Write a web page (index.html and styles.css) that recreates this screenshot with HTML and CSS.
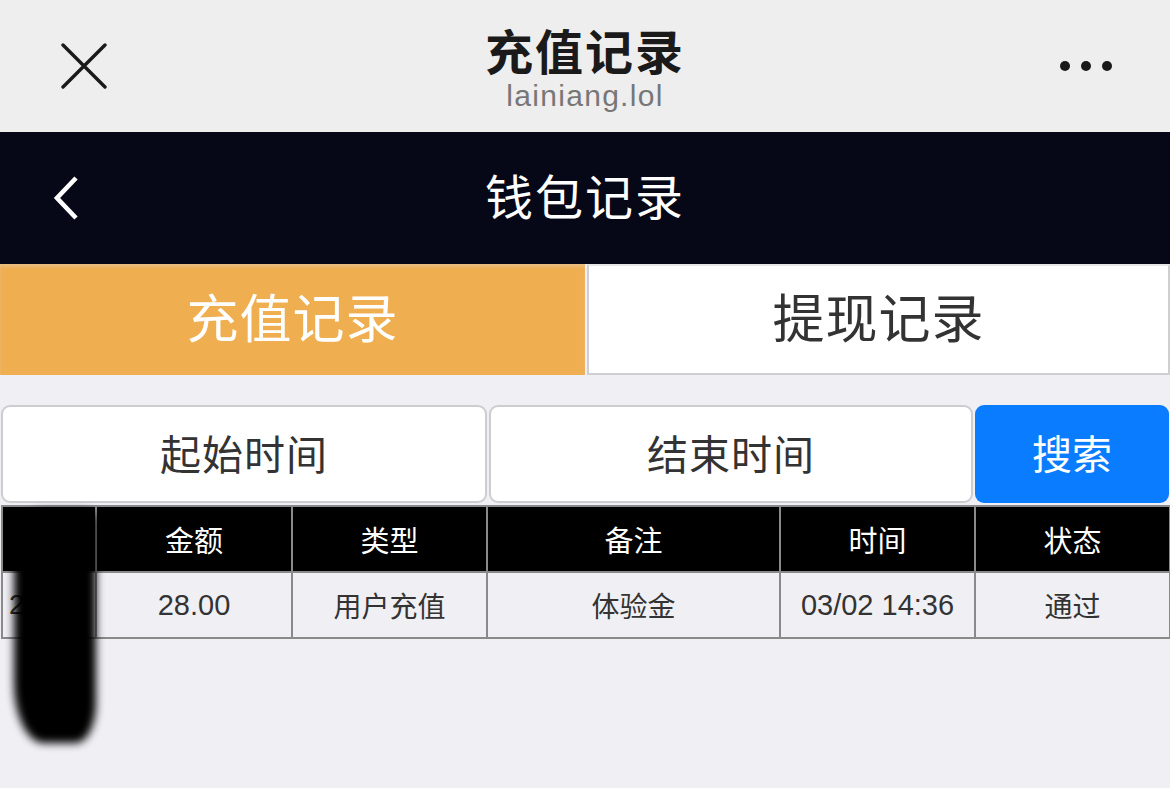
FILE: index.html
```html
<!DOCTYPE html>
<html lang="zh-CN">
<head>
<meta charset="utf-8">
<title>充值记录</title>
<link rel="stylesheet" href="styles.css">
</head>
<body>
<header class="topbar">
  <div class="top-left">
    <svg class="icon-close" width="46" height="46" viewBox="0 0 46 46"><path d="M2 2 L44 44 M44 2 L2 44" stroke="#1a1a1a" stroke-width="3.4" stroke-linecap="round" fill="none"/></svg>
  </div>
  <div class="top-title">
    <div class="top-main">充值记录</div>
    <div class="top-sub">lainiang.lol</div>
  </div>
  <div class="top-right">
    <span class="dot"></span><span class="dot"></span><span class="dot"></span>
  </div>
</header>

<nav class="navbar">
  <svg class="icon-back" width="30" height="46" viewBox="0 0 30 46"><path d="M25 3 L6 23 L25 43" stroke="#fff" stroke-width="4.6" stroke-linecap="butt" stroke-linejoin="miter" fill="none"/></svg>
  <div class="nav-title">钱包记录</div>
</nav>

<div class="tabs">
  <div class="tab tab-active">充值记录</div>
  <div class="tab tab-idle">提现记录</div>
</div>

<div class="filters">
  <div class="field">起始时间</div>
  <div class="field">结束时间</div>
  <div class="btn-search">搜索</div>
</div>

<div class="table-wrap">
  <table class="records">
    <colgroup>
      <col class="c-id"><col class="c-amt"><col class="c-type"><col class="c-note"><col class="c-time"><col class="c-state">
    </colgroup>
    <thead>
      <tr><th class="th-id">ID</th><th>金额</th><th>类型</th><th>备注</th><th>时间</th><th>状态</th></tr>
    </thead>
    <tbody>
      <tr><td class="td-id">2</td><td class="num">28.00</td><td>用户充值</td><td>体验金</td><td class="num">03/02 14:36</td><td>通过</td></tr>
    </tbody>
  </table>
  <div class="redact"></div>
</div>
</body>
</html>
```
FILE: styles.css
```css
* { box-sizing: border-box; }
html, body { margin: 0; padding: 0; }
body {
  width: 1170px;
  height: 788px;
  overflow: hidden;
  background: #efeff4;
  font-family: "Liberation Sans", "Noto Sans CJK SC", sans-serif;
  color: #333;
}

.topbar {
  height: 132px;
  background: #eeeeee;
  display: grid;
  grid-template-columns: 1fr auto 1fr;
  align-items: center;
}
.top-left { padding-left: 61px; display: flex; align-items: center; }
.icon-close { display: block; }
.top-title {
  text-align: center;
  display: flex;
  flex-direction: column;
  gap: 7px;
}
.top-main {
  font-family: "Noto Sans CJK SC", sans-serif;
  font-weight: 700;
  font-size: 48px;
  line-height: 52px;
  letter-spacing: 2px;
  color: #1a1a1a;
}
.top-sub {
  font-family: "Liberation Sans", "Noto Sans", sans-serif;
  font-size: 30px;
  line-height: 28px;
  color: #777;
  letter-spacing: 1.3px;
}
.top-right {
  display: flex;
  justify-content: flex-end;
  gap: 11px;
  padding-right: 58px;
}
.dot {
  width: 10px; height: 10px; border-radius: 50%;
  background: #1a1a1a;
  display: block;
}

.navbar {
  height: 132px;
  background: #060818;
  display: flex;
  align-items: center;
  padding-left: 51px;
}
.icon-back { display: block; }
.nav-title {
  flex: 1;
  text-align: center;
  margin-right: 81px;
  padding-bottom: 8px;
  font-family: "Noto Sans CJK SC", sans-serif;
  font-size: 48px;
  color: #fff;
  letter-spacing: 2px;
}

.tabs {
  height: 111px;
  display: flex;
}
.tab {
  display: flex;
  align-items: center;
  justify-content: center;
  padding-bottom: 8px;
  font-family: "Noto Sans CJK SC", sans-serif;
  font-size: 52px;
  letter-spacing: 1px;
}
.tab-active {
  width: 585px;
  background: #efae4f;
  color: #fff;
  box-shadow: inset 0 3px 3px rgba(230, 200, 160, 0.6);
}
.tab-idle {
  width: 583px;
  margin-left: 2px;
  background: #fff;
  color: #333;
  border: 2px solid #cfcfd3;
  border-top-color: #e6e6e6;
}

.filters {
  margin-top: 30px;
  height: 98px;
  display: flex;
  gap: 2px;
  padding: 0 1px;
}
.field, .btn-search {
  display: flex;
  align-items: center;
  justify-content: center;
  padding-bottom: 4px;
  font-family: "Noto Sans CJK SC", sans-serif;
  font-size: 41px;
  letter-spacing: 1px;
  border-radius: 9px;
}
.field {
  width: 486px;
  background: #fff;
  border: 2px solid #cdcdd0;
  color: #333;
}
.field + .field { width: 484px; }
.btn-search {
  flex: 1;
  background: #0a7cff;
  color: #fff;
  font-size: 40px;
  letter-spacing: 0;
}

.table-wrap {
  position: relative;
  margin-top: 2px;
  padding-left: 1px;
}
.records {
  border-collapse: collapse;
  table-layout: fixed;
  width: 1168px;
}
.c-id { width: 94px; }
.c-amt { width: 196px; }
.c-type { width: 195px; }
.c-note { width: 293px; }
.c-time { width: 195px; }
.c-state { width: 195px; }
.records th, .records td {
  border: 2px solid #8a8a8a;
  height: 66px;
  padding: 0;
  text-align: center;
  vertical-align: middle;
  font-size: 28px;
  font-weight: 400;
}
.records th {
  background: #000;
  color: #fff;
  font-family: "Noto Sans CJK SC", sans-serif;
  font-size: 29px;
}
.records th.th-id { color: #555; font-family: "Liberation Sans", sans-serif; }
.records td {
  background: #efeff4;
  color: #333;
  font-family: "Noto Sans CJK SC", sans-serif;
}
.records td.num { font-family: "Liberation Sans", sans-serif; font-size: 29px; }
.records td.td-id { text-align: left; padding-left: 6px; font-family: "Liberation Sans", sans-serif; }

.redact {
  position: absolute;
  left: 14px;
  top: 6px;
  width: 82px;
  height: 232px;
  background: #000;
  border-radius: 30px 10px 20px 30px / 30px 10px 40px 60px;
  filter: blur(4px);
}
```
